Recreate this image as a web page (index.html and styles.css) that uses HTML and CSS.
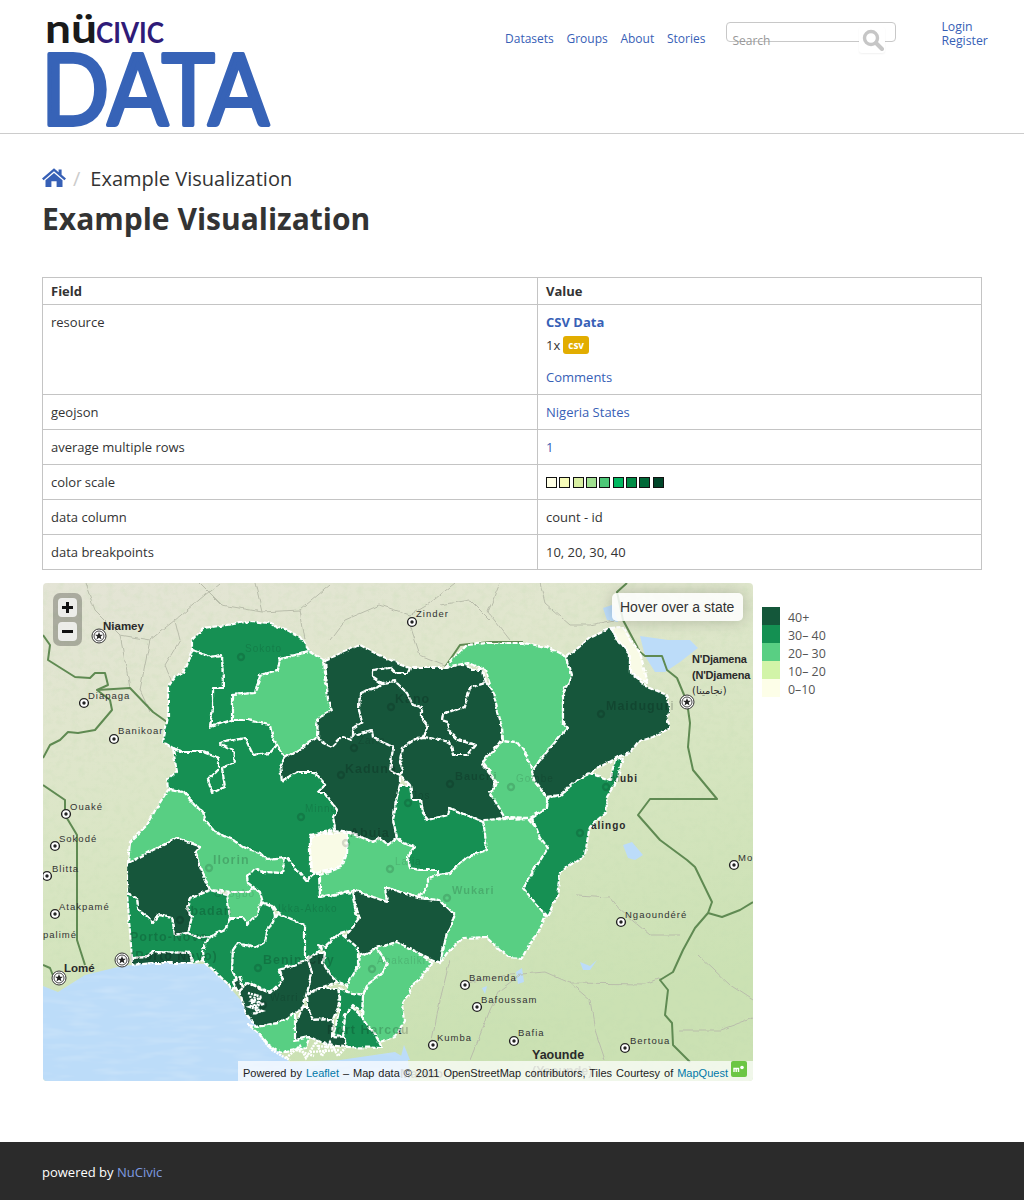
FILE: index.html
```html
<!DOCTYPE html>
<html lang="en">
<head>
<meta charset="utf-8">
<title>Example Visualization</title>
<link rel="stylesheet" href="styles.css">
</head>
<body>
<header class="site-header">
  <a class="logo" href="#" aria-label="NuCivic Data">
    <svg class="logo-svg" viewBox="0 0 230 120" width="230" height="120">
      <text class="logo-nu" x="-2" y="34" textLength="52" lengthAdjust="spacingAndGlyphs">nü</text>
      <text class="logo-civic" x="49" y="34" textLength="68" lengthAdjust="spacingAndGlyphs">CIVIC</text>
      <text class="logo-data" x="-6" y="116" textLength="228" lengthAdjust="spacingAndGlyphs">DATA</text>
    </svg>
  </a>
  <nav class="main-nav">
    <a href="#">Datasets</a><a href="#">Groups</a><a href="#">About</a><a href="#">Stories</a>
  </nav>
  <div class="search">
    <span class="search-text">Search</span>
    <span class="search-btn">
      <svg viewBox="0 0 22 22" width="22" height="22"><circle cx="9" cy="9" r="6.5" class="ic-stroke"/><path d="M14 14l6 6" class="ic-handle"/></svg>
    </span>
  </div>
  <div class="user-nav"><a href="#">Login</a><a href="#">Register</a></div>
</header>

<main class="content">
  <div class="breadcrumb">
    <svg class="home" viewBox="0 0 24 19" width="24" height="19"><path d="M12 0.2 L16.6 4.2V1.6H19.6V6.8L24 10.6 22.4 12.3 12 3.3 1.6 12.3 0 10.6Z"/><path d="M12 5 L20.5 12.3V19H14.6V13.2H9.4V19H3.5V12.3Z"/></svg>
    <span class="sep">/</span>
    <span class="crumb">Example Visualization</span>
  </div>
  <h1>Example Visualization</h1>

  <table class="fields">
    <thead><tr><th class="c1">Field</th><th>Value</th></tr></thead>
    <tbody>
      <tr><td>resource</td><td>
        <a class="strong" href="#">CSV Data</a>
        <div class="fmt">1x <span class="badge">csv</span></div>
        <a class="comments" href="#">Comments</a>
      </td></tr>
      <tr><td>geojson</td><td><a href="#">Nigeria States</a></td></tr>
      <tr><td>average multiple rows</td><td><a href="#">1</a></td></tr>
      <tr><td>color scale</td><td><div class="swatches"><i class="s1"></i><i class="s2"></i><i class="s3"></i><i class="s4"></i><i class="s5"></i><i class="s6"></i><i class="s7"></i><i class="s8"></i><i class="s9"></i></div></td></tr>
      <tr><td>data column</td><td>count - id</td></tr>
      <tr><td>data breakpoints</td><td>10, 20, 30, 40</td></tr>
    </tbody>
  </table>

  <div class="viz">
    <div class="map">
      <svg class="map-svg" viewBox="43 583 710 498" width="710" height="498">
        <defs>
          <linearGradient id="land" x1="0" y1="0" x2="0.35" y2="1">
            <stop offset="0" stop-color="#e4e4d6"/>
            <stop offset=".28" stop-color="#e0e6cd"/>
            <stop offset=".6" stop-color="#d6e5c0"/>
            <stop offset="1" stop-color="#cbe1b3"/>
          </linearGradient>
          <filter id="grain" x="0" y="0" width="100%" height="100%">
            <feTurbulence type="fractalNoise" baseFrequency=".14 .16" numOctaves="3" seed="4"/>
            <feColorMatrix type="matrix" values="0 0 0 0 .55  0 0 0 0 .72  0 0 0 0 .45  0 0 0 1.6 -.72"/>
          </filter>
          <filter id="ripple" x="0" y="0" width="100%" height="100%">
            <feTurbulence type="fractalNoise" baseFrequency=".03 .16" numOctaves="2" seed="7"/>
            <feColorMatrix type="matrix" values="0 0 0 0 1  0 0 0 0 1  0 0 0 0 1  0 0 0 1.2 -.5"/>
          </filter>
          <filter id="wobble" x="0" y="0" width="100%" height="100%" filterUnits="objectBoundingBox">
            <feTurbulence type="fractalNoise" baseFrequency=".11" numOctaves="2" seed="3" result="n"/>
            <feDisplacementMap in="SourceGraphic" in2="n" scale="4" xChannelSelector="R" yChannelSelector="G"/>
          </filter>
          <symbol id="town" viewBox="-6 -6 12 12"><circle r="4.4" class="town-o"/><circle r="1.7" class="town-d"/></symbol>
          <symbol id="capital" viewBox="-9 -9 18 18"><circle r="7" class="cap-o"/><circle r="5" class="cap-i"/><path class="town-d" d="M0-4 1.1-1.3 4-1.2 1.7.6 2.5 3.4 0 1.8-2.5 3.4-1.7.6-4-1.2-1.1-1.3Z"/></symbol>
        </defs>

        <rect x="43" y="583" width="710" height="498" fill="url(#land)"/>
        <rect x="43" y="583" width="710" height="498" filter="url(#grain)" opacity=".35"/>

        <clipPath id="sea-clip"><path d="M43 986 58 992 85 975 122 966 160 962 205 964 225 982 245 1005 265 1040 290 1062 340 1060 395 1052 408 1060 410 1081H43Z"/></clipPath>
        <path class="sea" d="M43 986 58 992 85 975 122 966 160 962 205 964 225 982 245 1005 265 1040 290 1062 340 1060 395 1052 408 1060 410 1081H43Z"/>
        <rect x="43" y="960" width="370" height="121" filter="url(#ripple)" opacity=".3" clip-path="url(#sea-clip)"/>
        <path class="sea" d="M603 608 612 605 618 622 607 620ZM640 636 668 640 690 640 698 648 680 662 665 672 655 672 645 656Z"/>
        <path class="sea" d="M623 845 632 842 643 855 635 860 628 858ZM580 962 590 966 597 960 590 970 583 970ZM516 972 522 968 524 982 518 984ZM482 988 487 986 485 994ZM400 1060 404 1045 410 1060Z"/>

        <g class="borders-thin" filter="url(#wobble)">
          <path d="M85 583 95 610 120 635 150 640 175 620 205 595 220 583"/>
          <path d="M120 635 130 688M150 640 140 690 150 712M175 620 180 640 165 665 175 690"/>
          <path d="M200 583 222 605 262 612 300 610 330 585M262 612 255 583M300 610 305 640"/>
          <path d="M330 640 345 620 380 605 410 615 430 603 455 583M410 625 420 655 445 665M540 583 545 603 570 625 590 625 614 620M500 583 488 612 510 640M440 605 470 600 490 620"/>
          <path d="M460 985 480 980 510 975 545 972 570 983 645 984 660 978M570 983 590 1000 595 1030 605 1060M520 975 500 990 490 1010 470 1060M450 960 440 1000 430 1050M577 895 610 897 620 910 650 935 680 935M698 955 730 985 753 1000M680 1030 720 1030 753 1018"/>
        </g>
        <g class="borders">
          <path d="M43 635 50 645 48 660 75 677 90 678 95 673 105 673 108 685 97 690 110 700 112 710 95 730 78 733 68 732 60 740 50 745 43 758"/>
          <path d="M97 690 130 688 153 712 167 722"/>
          <path d="M43 785 65 800 65 815 77 835 77 940 85 965"/>
          <path d="M43 965 50 968 54 978"/>
          <path d="M627 583 617 592 623 620 640 652 645 656 662 656 667 670 677 678 687 702 690 723 688 747 693 770 717 799 650 799 638 815 660 840 687 860 695 867 712 902 708 913 695 928 683 950 673 972 660 980 668 990 665 1015 672 1023 673 1045 690 1062"/>
          <path d="M708 913 722 917 740 910 753 902"/>
          <path d="M445 667 460 645 490 642 523 642"/>
        </g>

        <g class="towns-base">
          <use href="#capital" x="90" y="627" width="18" height="18"/>
          <use href="#town" x="406" y="616" width="12" height="12"/>
          <use href="#town" x="78" y="697" width="12" height="12"/>
          <use href="#town" x="108" y="733" width="12" height="12"/>
          <use href="#town" x="60" y="808" width="12" height="12"/>
          <use href="#town" x="49" y="840" width="12" height="12"/>
          <use href="#town" x="41" y="870" width="12" height="12"/>
          <use href="#town" x="49" y="908" width="12" height="12"/>
          <use href="#capital" x="50" y="969" width="18" height="18"/>
          <use href="#capital" x="113" y="951" width="18" height="18"/>
          <use href="#capital" x="678" y="693" width="18" height="18"/>
          <use href="#town" x="728" y="859" width="12" height="12"/>
          <use href="#town" x="615" y="916" width="12" height="12"/>
          <use href="#town" x="459" y="979" width="12" height="12"/>
          <use href="#town" x="471" y="1001" width="12" height="12"/>
          <use href="#town" x="427" y="1039" width="12" height="12"/>
          <use href="#town" x="508" y="1035" width="12" height="12"/>
          <use href="#town" x="619" y="1042" width="12" height="12"/>
        </g>
        <g class="labels">
          <text class="lb-b" x="103" y="630">Niamey</text>
          <text x="416" y="617">Zinder</text>
          <text x="88" y="699">Diapaga</text>
          <text x="118" y="734">Banikoar</text>
          <text x="70" y="810">Ouaké</text>
          <text x="59" y="842">Sokodé</text>
          <text x="52" y="872">Blitta</text>
          <text x="59" y="910">Atakpamé</text>
          <text x="43" y="938">palimé</text>
          <text class="lb-b" x="64" y="972">Lomé</text>
          <text class="lb-n" x="692" y="663">N'Djamena</text>
          <text class="lb-n" x="692" y="679">(N'Djamena</text>
          <text class="lb-ar" x="692" y="694">(نجامينا)</text>
          <text class="lb-s" x="620" y="782">ubi</text>
          <text class="lb-s" x="591" y="829">alingo</text>
          <text x="738" y="861">Mo</text>
          <text x="625" y="918">Ngaoundéré</text>
          <text x="469" y="981">Bamenda</text>
          <text x="481" y="1003">Bafoussam</text>
          <text x="437" y="1041">Kumba</text>
          <text x="518" y="1036">Bafia</text>
          <text x="630" y="1044">Bertoua</text>
          <text class="lb-y" x="532" y="1059">Yaounde</text>
          <text class="lb-y lb-f" x="532" y="1075">(Yaounde)</text>
          <text class="lb-y lb-f" x="400" y="1078">Malabo</text>
          <text class="lb-s" x="393" y="1034">rt</text>
        </g>

        <g class="states" filter="url(#wobble)">
          <polygon class="st30" points="192,640 203,628 227,625 252,621 267,623 287,630 300,637 310,652 280,658 278,670 260,675 255,693 232,695 232,720 210,727 213,707 213,688 223,688 222,655 210,657 192,650"/>
          <polygon class="st30" points="192,650 210,657 222,655 223,688 213,688 213,707 210,727 232,720 247,720 270,725 272,735 277,745 270,753 253,755 245,738 220,743 233,750 235,763 222,768 225,787 212,793 208,780 218,770 218,758 203,752 183,752 173,748 163,742 168,717 168,687 175,677 183,673"/>
          <polygon class="st20" points="232,695 255,693 260,675 278,670 280,658 310,652 323,660 325,683 333,710 317,720 318,737 285,758 277,745 272,735 270,725 247,720 232,720"/>
          <polygon class="st40" points="325,660 337,655 360,645 373,652 397,663 410,668 408,673 395,673 390,668 373,670 373,677 382,683 375,688 360,693 359,710 362,722 353,728 355,735 352,740 342,737 332,747 323,743 317,737 318,718 332,711 328,700"/>
          <polygon class="st40" points="382,683 395,681 407,693 413,705 422,707 422,720 428,728 422,737 417,738 402,748 400,762 404,772 400,775 390,770 393,747 373,738 372,730 353,735 353,728 362,722 359,710 360,693 375,688"/>
          <polygon class="st40" points="373,670 390,668 395,673 408,673 410,668 447,668 465,662 470,670 482,670 485,683 470,688 465,707 443,715 442,720 448,722 450,732 458,740 476,745 468,755 453,755 450,742 423,737 428,728 422,720 422,707 413,705 407,693 395,681 382,683 373,677"/>
          <polygon class="st40" points="423,737 450,742 453,755 468,755 476,745 458,740 450,732 448,722 442,720 443,715 465,707 470,688 485,683 493,687 502,727 502,738 490,753 482,765 495,780 492,793 503,807 505,817 483,822 450,808 448,815 428,820 422,813 420,800 412,800 410,785 400,775 404,772 400,762 402,748 417,738"/>
          <polygon class="st40" points="285,758 318,737 323,743 332,747 342,737 352,740 353,735 372,730 373,738 393,747 390,770 400,775 400,783 397,797 393,820 397,837 388,845 380,838 373,842 350,832 335,830 333,817 337,810 325,793 317,793 325,785 315,772 297,772 282,782 280,767"/>
          <polygon class="st30" points="173,748 183,752 203,752 218,758 218,770 208,780 212,793 225,787 222,768 235,763 233,750 220,743 245,738 253,755 270,753 277,745 285,758 280,767 282,782 297,772 315,772 325,785 317,793 325,793 337,810 333,817 335,830 310,835 310,870 315,873 307,882 288,858 267,860 260,853 243,847 233,840 217,833 205,820 203,813 183,792 168,788 167,780 177,772 175,760"/>
          <polygon class="st20" points="128,863 130,842 147,825 157,807 168,790 183,792 203,813 205,820 217,833 233,840 243,847 260,853 267,860 285,858 282,873 263,872 255,868 247,877 248,883 260,892 253,888 248,892 232,892 210,890 200,867 195,853 200,847 177,838 153,850 137,860"/>
          <polygon class="st20" points="227,895 232,892 248,892 253,888 260,892 262,900 257,915 248,925 243,918 230,918 228,908"/>
          <polygon class="st40" points="128,863 153,850 177,838 200,847 195,853 200,867 210,890 190,898 187,907 192,917 188,933 175,935 172,918 158,915 153,922 138,908 137,898 127,893 127,870"/>
          <polygon class="st30" points="127,893 137,898 138,908 153,922 158,915 172,918 175,935 188,933 200,938 210,937 202,952 203,960 192,963 190,953 153,952 148,957 132,958"/>
          <polygon class="st40" points="132,958 148,957 153,952 190,953 192,963 153,963 132,965"/>
          <polygon class="st30" points="187,907 190,898 210,890 227,895 230,918 225,930 210,937 200,938 188,933 192,917"/>
          <polygon class="st30" points="230,918 243,918 248,925 257,915 262,903 273,908 275,917 267,933 265,942 255,948 238,943 233,950 232,970 238,982 233,990 227,983 208,965 203,960 202,952 210,937 225,930"/>
          <polygon class="st30" points="233,950 238,943 255,948 265,942 267,933 275,917 278,913 305,925 305,958 310,960 278,970 283,980 270,993 250,983 246,985 238,982 232,970"/>
          <polygon class="st30" points="247,877 255,868 263,872 282,873 285,858 288,858 307,882 315,873 319,875 320,897 352,892 355,908 360,927 340,933 323,948 312,957 305,958 305,925 278,913 273,905 263,903 260,892 248,883"/>
          <polygon class="st0" points="310,837 330,833 348,832 347,853 342,867 317,873 312,870 310,850"/>
          <polygon class="st20" points="348,832 373,842 380,838 388,845 397,837 403,843 415,847 408,857 410,868 420,870 438,870 440,875 428,878 428,887 418,898 385,887 387,902 353,890 320,897 320,875 342,867 347,853"/>
          <polygon class="st30" points="400,785 410,785 412,800 420,800 422,813 428,820 448,815 450,808 483,822 485,830 487,850 467,857 450,873 438,875 438,870 420,870 410,868 408,857 415,847 403,843 397,837 393,820 397,797"/>
          <polygon class="st40" points="353,890 387,902 385,887 418,898 440,900 455,915 447,933 440,963 418,953 397,942 380,947 362,955 345,937 360,918 355,903"/>
          <polygon class="st20" points="418,898 428,887 428,878 440,875 450,873 467,857 487,850 483,820 528,818 542,835 548,848 523,888 542,907 545,917 540,930 530,943 522,958 508,957 487,937 463,938 447,953 440,963 447,933 455,915 440,900"/>
          <polygon class="st30" points="532,818 547,808 548,798 560,795 577,780 590,773 610,780 615,760 623,758 617,780 607,797 605,813 590,827 589,830 585,855 560,872 557,897 547,917 523,888 548,848 540,837"/>
          <polygon class="st20" points="483,763 503,740 517,742 528,757 532,772 535,782 547,798 547,808 530,818 505,817 490,793 498,783"/>
          <polygon class="st20" points="445,667 467,645 487,643 523,643 547,647 567,657 572,675 563,693 563,723 567,728 557,740 540,760 532,772 528,757 517,742 503,740 502,727 493,693 485,670 468,663"/>
          <polygon class="st40" points="567,657 590,638 610,628 620,643 630,655 630,673 648,687 667,695 670,707 667,722 670,728 653,737 638,742 630,753 617,757 590,773 577,780 560,795 547,797 535,782 532,772 540,760 557,740 567,728 563,723 563,693 572,675"/>
          <polygon class="st0" points="610,628 622,627 640,653 648,683 630,673 630,655 620,643"/>
          <polygon class="st30" points="318,945 325,948 340,933 345,937 358,948 358,967 347,985 337,982 330,975 323,963 325,953"/>
          <polygon class="st20" points="358,967 360,957 377,948 387,963 383,973 367,985 363,995 347,992 347,985"/>
          <polygon class="st20" points="377,948 397,942 417,952 433,963 412,987 403,1003 405,1020 395,1037 380,1042 377,1038 362,1017 363,997 367,985 383,973 387,963"/>
          <polygon class="st30" points="352,1007 362,1017 377,1038 382,1048 347,1047 343,1037 345,1015"/>
          <polygon class="st30" points="340,987 347,992 363,995 362,1012 353,1005 345,1015 343,1037 333,1036 338,1017 340,1003"/>
          <polygon class="st40" points="308,960 318,953 325,953 323,963 330,975 337,982 320,988 307,993 312,973"/>
          <polygon class="st40" points="320,988 338,988 340,1003 333,1019 313,1020 308,1008 307,995"/>
          <polygon class="st40" points="303,1008 308,1008 313,1020 333,1019 332,1037 345,1038 345,1047 327,1045 310,1037 295,1040 295,1025"/>
          <polygon class="st40" points="280,970 308,960 312,973 307,993 303,1008 295,1013 278,1023 257,1027 247,1015 243,1005 240,990 247,983 270,993 283,980"/>
          <polygon class="st40" points="233,982 240,978 243,988 238,992"/>
          <polygon class="st20" points="248,1025 257,1027 278,1023 295,1013 295,1040 310,1037 305,1048 280,1053 268,1045 260,1035"/>
        </g>
        <g class="speck">
          <path d="M248 993 262 997 252 1001 264 1004 250 1007 262 1011 252 1014"/>
          <path d="M250 996 258 1013M256 994 250 1008M260 998 255 1015"/>
          <path d="M286 1058 300 1046 306 1058 316 1042 322 1056 330 1042 338 1056 345 1048M310 1052 340 1050M296 1050 314 1056M318 1046 336 1048"/>
          <path d="M262 1038 272 1050 282 1056 290 1060"/>
        </g>
        <g class="under">
          <text x="245" y="652">Sokoto</text>
          <text class="ub" x="395" y="703">Kano</text>
          <text x="358" y="744">Zaria</text>
          <text class="ub" x="345" y="773">Kaduna</text>
          <text x="305" y="812">Minna</text>
          <text class="ub" x="606" y="710">Maiduguri</text>
          <text class="um" x="455" y="780">Bauchi</text>
          <text x="516" y="782">Gombe</text>
          <text x="412" y="799">Jos</text>
          <text class="ub" x="350" y="837">Abuja</text>
          <text x="395" y="865">Lafia</text>
          <text class="um" x="452" y="894">Wukari</text>
          <text class="ub" x="213" y="864">Ilorin</text>
          <text x="214" y="897">Osogbo</text>
          <text class="ub" x="186" y="915">Ibadan</text>
          <text class="ub" x="130" y="941">Porto-Novo</text>
          <text class="ub" x="130" y="960">(Porto Novo)</text>
          <text class="ub" x="263" y="964">Benin City</text>
          <text x="270" y="1001">Warri</text>
          <text x="278" y="912">Ikka-Akoko</text>
          <text x="377" y="964">Abakaliki</text>
          <text class="ub" x="327" y="1034">Port Harcou</text>
          <text class="ub" x="610" y="782">M</text>
          <circle class="ud" cx="241" cy="657" r="3"/><circle class="ud" cx="391" cy="707" r="3"/><circle class="ud" cx="354" cy="748" r="3"/><circle class="ud" cx="341" cy="775" r="3"/><circle class="ud" cx="301" cy="817" r="3"/><circle class="ud" cx="601" cy="714" r="3"/><circle class="ud" cx="450" cy="784" r="3"/><circle class="ud" cx="511" cy="787" r="3"/><circle class="ud" cx="408" cy="803" r="3"/><circle class="ud" cx="390" cy="869" r="3"/><circle class="ud" cx="447" cy="898" r="3"/><circle class="ud" cx="209" cy="868" r="3"/><circle class="ud" cx="180" cy="920" r="3"/><circle class="ud" cx="258" cy="968" r="3"/><circle class="ud" cx="372" cy="969" r="3"/><circle class="ud" cx="606" cy="787" r="3"/><circle class="ud" cx="580" cy="833" r="3"/><circle class="ud" cx="263" cy="1005" r="3"/><circle class="ud" cx="346" cy="843" r="3"/>
        </g>
      </svg>

      <div class="zoom-ctl">
        <a class="zoom-btn" href="#"><svg viewBox="0 0 11 11" width="11" height="11"><path d="M4 0h3v4h4v3H7v4H4V7H0V4h4z"/></svg></a>
        <a class="zoom-btn" href="#"><svg viewBox="0 0 11 11" width="11" height="11"><path d="M0 4h11v3H0z"/></svg></a>
      </div>
      <div class="hover-info">Hover over a state</div>
      <div class="attribution">Powered by <a href="#">Leaflet</a> – Map data © 2011 OpenStreetMap contributors, Tiles Courtesy of <a href="#">MapQuest</a>
        <svg class="mq" viewBox="0 0 16 16" width="16" height="16"><rect width="16" height="16" rx="2"/><path class="mq-m" d="M3 11V7.5h4.5V11M5.2 7.5V11"/><circle class="mq-q" cx="11" cy="6.5" r="1.8"/></svg>
      </div>
    </div>
    <ul class="legend">
      <li><i class="k40"></i>40+</li>
      <li><i class="k30"></i>30– 40</li>
      <li><i class="k20"></i>20– 30</li>
      <li><i class="k10"></i>10– 20</li>
      <li><i class="k0"></i>0–10</li>
    </ul>
  </div>
</main>

<footer class="site-footer">powered by <a href="#">NuCivic</a></footer>
</body>
</html>
```
FILE: styles.css
```css
* { box-sizing: border-box; }
html, body { margin: 0; padding: 0; }
body {
  background: #fff;
  color: #333;
  font-family: "Open Sans", "Noto Sans", sans-serif;
  font-size: 13px;
  line-height: 18px;
}
a { color: #3760b6; text-decoration: none; }

.site-header {
  display: flex;
  align-items: flex-start;
  height: 134px;
  border-bottom: 1px solid #ccc;
}
.logo { display: block; width: 230px; height: 120px; margin: 9px 0 0 47px; }
.logo-svg { display: block; overflow: visible; }
.logo-nu { font: 700 40px "Lato", sans-serif; fill: #1a1a1a; }
.logo-civic { font: 700 28px "Lato", sans-serif; fill: #2f1b78; }
.logo-data { font: 400 99px "Lato", sans-serif; fill: #3763b7; stroke: #3763b7; stroke-width: 4px; stroke-linejoin: round; }

.main-nav { display: flex; gap: 12.7px; margin: 30px 0 0 228px; font-size: 12px; }
.search {
  position: relative;
  width: 170px;
  height: 20px;
  margin: 22px 0 0 21px;
  border: 1px solid #c8c8c8;
  border-radius: 4px;
}
.search-text { position: absolute; left: 5px; top: 9px; color: #999; font-size: 12px; }
.search-btn {
  position: absolute;
  left: 132px;
  top: 4px;
  width: 26px;
  height: 26px;
  padding: 2px 3px;
  background: #fff;
  border-radius: 3px;
  box-shadow: 0 1px 2px rgba(0,0,0,.06);
}
.search-btn svg { display: block; }
.ic-stroke { fill: none; stroke: #c6c6c6; stroke-width: 3.4; }
.ic-handle { fill: none; stroke: #c6c6c6; stroke-width: 4; stroke-linecap: round; }
.user-nav {
  display: flex;
  flex-direction: column;
  margin: 20px 0 0 45px;
  line-height: 14px;
  font-size: 12.3px;
}

.content { padding: 33px 42px 0; }
.breadcrumb { display: flex; align-items: center; height: 24px; }
.home { display: block; fill: #3760b6; margin-top: -4px; }
.sep { color: #ccc; font-size: 20px; margin-left: 7px; }
.crumb { font-size: 20px; margin-left: 10px; color: #333; line-height: 24px; }
h1 {
  margin: 8px 0 38px;
  font-size: 30px;
  line-height: 40px;
  font-weight: 700;
  color: #333;
}

.fields { width: 940px; border-collapse: collapse; table-layout: fixed; }
.fields th, .fields td {
  border: 1px solid #c4c4c4;
  padding: 8px;
  text-align: left;
  vertical-align: top;
  font-weight: 400;
}
.fields th { padding: 4px 8px; font-weight: 700; }
.c1 { width: 495px; }
.strong { font-weight: 700; display: block; }
.fmt { margin-top: 3px; height: 22px; display: flex; align-items: center; gap: 3px; }
.badge {
  display: block;
  background: #e2ad00;
  color: #fff;
  font-size: 10px;
  font-weight: 700;
  line-height: 18px;
  padding: 0 5px;
  border-radius: 3px;
}
.comments { display: block; margin-top: 12px; }
.swatches { display: flex; gap: 2.33px; padding-top: 4px; height: 18px; }
.swatches i { display: block; width: 11px; height: 11px; border: 1px solid #111; }
.s1 { background: #ffffe5; } .s2 { background: #f7fcb9; } .s3 { background: #d9f0a3; }
.s4 { background: #a0e090; } .s5 { background: #4dc878; } .s6 { background: #00b860; }
.s7 { background: #008c45; } .s8 { background: #006837; } .s9 { background: #004529; }

.viz { display: flex; margin-top: 13px; padding-left: 1px; }
.map { position: relative; width: 710px; height: 498px; border-radius: 4px; overflow: hidden; flex: none; }
.map-svg { display: block; }
.sea { fill: #bcdcf9; }
.borders path { fill: none; stroke: #5f8a52; stroke-width: 2; stroke-linejoin: round; }
.borders-thin path { fill: none; stroke: #b9bdab; stroke-width: 1; }
.town-o { fill: #fff; stroke: #222; stroke-width: 1.4; }
.town-d { fill: #222; }
.cap-o { fill: #fff; stroke: #333; stroke-width: 1; }
.cap-i { fill: #fff; stroke: #444; stroke-width: 1; }
.labels text { font: 400 9.5px "Liberation Sans", sans-serif; letter-spacing: 1px; fill: #333; }
.labels .lb-b { font-size: 11.5px; font-weight: 700; letter-spacing: 0; fill: #2a2a2a; }
.labels .lb-n { font-size: 11px; font-weight: 700; letter-spacing: -.2px; fill: #2a2a2a; }
.labels .lb-ar { font: 400 10px "DejaVu Sans", sans-serif; letter-spacing: 0; fill: #2a2a2a; }
.labels .lb-s { font-size: 10px; font-weight: 700; fill: #2a2a2a; }
.labels .lb-y { font-size: 12.5px; font-weight: 700; letter-spacing: 0; fill: #2a2a2a; }
.labels .lb-f { opacity: .45; }

.states polygon { stroke: #fff; stroke-width: 2.2; stroke-dasharray: 5 1.4; stroke-linejoin: round; }
.st40 { fill: #14573a; }
.st30 { fill: #149052; }
.st20 { fill: #59cf83; }
.st0 { fill: #f9fbe6; }
.speck path { fill: none; stroke: #fff; stroke-width: 2.4; stroke-dasharray: 2 1; }
.under text { font: 400 10px "Liberation Sans", sans-serif; letter-spacing: 1px; fill: #000; opacity: .12; }
.under .ub { font-size: 12.5px; font-weight: 700; opacity: .18; }
.under .um { font-size: 11px; font-weight: 700; opacity: .16; }
.ud { fill: none; stroke: #000; stroke-width: 2.4; opacity: .14; }

.zoom-ctl {
  position: absolute;
  left: 10px;
  top: 10px;
  width: 29px;
  height: 53px;
  padding: 5px;
  display: flex;
  flex-direction: column;
  gap: 5px;
  background: rgba(0,0,0,.25);
  border-radius: 7px;
}
.zoom-btn {
  display: flex;
  align-items: center;
  justify-content: center;
  width: 19px;
  height: 19px;
  background: rgba(255,255,255,.78);
  border-radius: 4px;
}
.zoom-btn svg { fill: #111; }
.hover-info {
  position: absolute;
  left: 569px;
  top: 10px;
  width: 131px;
  height: 28px;
  padding: 0 8px;
  background: rgba(255,255,255,.85);
  border-radius: 5px;
  box-shadow: 0 0 15px rgba(0,0,0,.2);
  font: 14px/28px "Liberation Sans", sans-serif;
  color: #333;
  white-space: nowrap;
}
.attribution {
  position: absolute;
  right: 0;
  bottom: 0;
  width: 515px;
  height: 20px;
  padding-left: 5px;
  background: rgba(255,255,255,.72);
  font: 11px/24px "Liberation Sans", sans-serif;
  word-spacing: .9px;
  color: #222;
  white-space: nowrap;
}
.attribution a { color: #0078a8; }
.mq { position: absolute; right: 6px; top: 0; fill: #6cc644; }
.mq-m { fill: none; stroke: #fff; stroke-width: 1.4; }
.mq-q { fill: #fff; }

.legend { list-style: none; margin: 24px 0 0 9px; padding: 0; color: #555; font-size: 12.4px; }
.legend li { display: flex; height: 18px; line-height: 21px; white-space: nowrap; }
.legend i { display: block; width: 18px; height: 18px; margin-right: 8px; }
.k40 { background: #14573a; } .k30 { background: #149052; } .k20 { background: #59cf83; }
.k10 { background: #d2f4a8; } .k0 { background: #fdfee8; }

.site-footer {
  margin-top: 61px;
  height: 58px;
  padding-left: 42px;
  background: #2b2b2b;
  color: #fff;
  line-height: 61px;
  font-size: 13px;
}
.site-footer a { color: #7f9be0; }
```
